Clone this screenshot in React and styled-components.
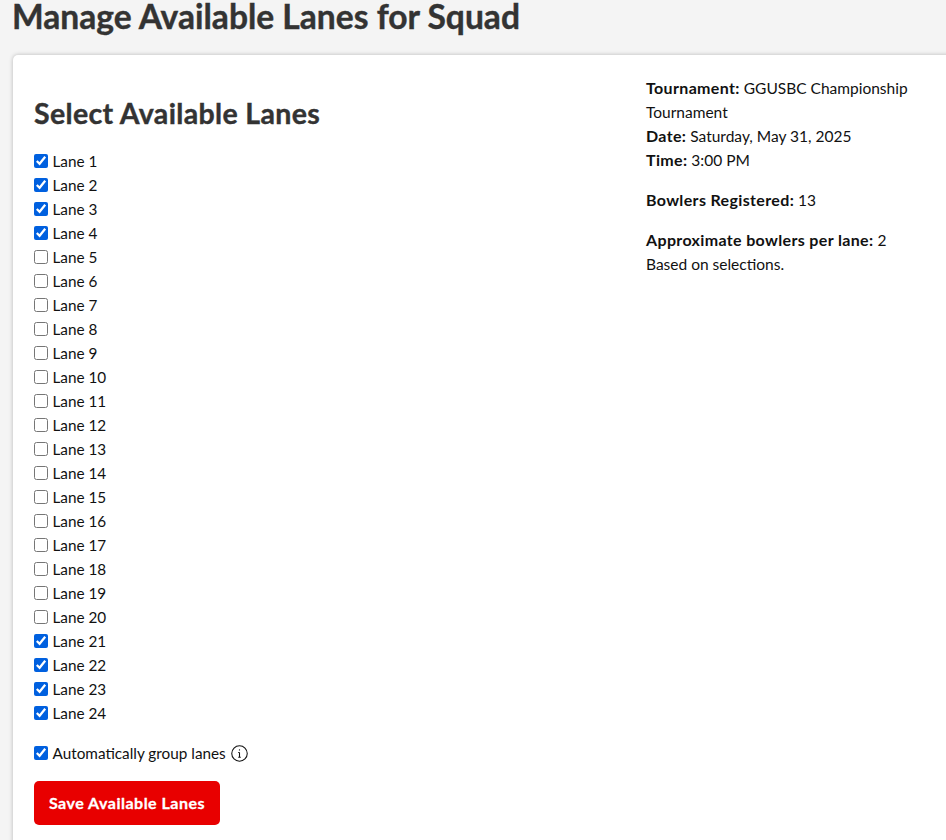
import React from "react"
import styled, { createGlobalStyle } from "styled-components"

const lanes = Array.from({ length: 24 }, (_, i) => ({
  id: i + 1,
  checked: i < 4 || i >= 20
}))

const GlobalStyle = createGlobalStyle`
  html, body {
    margin: 0;
    padding: 0;
    background: #f4f4f4;
    color: #111;
    font-family: Lato, "Open Sans", sans-serif;
    font-size: 16px;
    line-height: 24px;
  }
`

const Page = styled.div`
  height: 840px;
  overflow: hidden;
  padding-left: 13px;
`

const Title = styled.h1`
  margin: 0 0 0 -1px;
  height: 55px;
  font-size: 33.6px;
  line-height: 32px;
  font-weight: 700;
  color: #333;
  -webkit-text-stroke: 0.4px #333;
`

const Card = styled.div`
  display: grid;
  grid-template-columns: 612px 1fr;
  width: 960px;
  height: 800px;
  padding: 21px 21px 0;
  box-sizing: border-box;
  background: #fff;
  border-radius: 5px;
  box-shadow: 0 0 4px rgba(0, 0, 0, 0.25);
`

const Form = styled.div`
  padding-top: 19px;
`

const Heading = styled.h2`
  margin: 0 0 18px;
  font-size: 28.5px;
  line-height: 36px;
  letter-spacing: 0.35px;
  font-weight: 700;
  color: #333;
  -webkit-text-stroke: 0.4px #333;
`

const LaneList = styled.div`
  display: flex;
  flex-direction: column;
  margin-bottom: 16px;
`

const Row = styled.label`
  display: flex;
  align-items: center;
  height: 24px;
  font-size: 15.3px;
`

const Check = styled.input.attrs({ type: "checkbox" })`
  width: 14px;
  height: 14px;
  margin: 0 4.5px 0 0;
  accent-color: #0060df;
`

const InfoIcon = styled.svg`
  width: 17px;
  height: 17px;
  margin-left: 5px;
  fill: none;
  stroke: #111;
`

const SaveButton = styled.button`
  display: block;
  margin-top: 16px;
  width: 186px;
  height: 44px;
  padding: 0 0 2px;
  border: 0;
  border-radius: 5px;
  background: #e80000;
  color: #fff;
  font-family: inherit;
  font-size: 16px;
  letter-spacing: 0.5px;
  font-weight: 700;
  -webkit-text-stroke: 0.3px #fff;
`

const Side = styled.div`
  padding-right: 30px;
  font-size: 15.5px;
`

const Para = styled.p`
  margin: 0 0 16px;
`

const Label = styled.b`
  font-size: 16px;
  letter-spacing: 0.35px;
`

export default function App() {
  return (
    <Page>
      <GlobalStyle />
      <Title>Manage Available Lanes for Squad</Title>
      <Card>
        <Form>
          <Heading>Select Available Lanes</Heading>
          <LaneList>
            {lanes.map(lane => (
              <Row key={lane.id}>
                <Check defaultChecked={lane.checked} />
                Lane {lane.id}
              </Row>
            ))}
          </LaneList>
          <Row>
            <Check defaultChecked />
            Automatically group lanes
            <InfoIcon viewBox="0 0 16 16">
              <circle cx="8" cy="8" r="7.3" />
              <path d="M8 7v4.5M6.8 7H8M6.8 11.5h2.4" />
              <circle cx="8" cy="4.6" r="0.6" fill="#111" stroke="none" />
            </InfoIcon>
          </Row>
          <SaveButton>Save Available Lanes</SaveButton>
        </Form>
        <Side>
          <Para>
            <Label>Tournament:</Label> GGUSBC Championship Tournament
            <br />
            <Label>Date:</Label> Saturday, May 31, 2025
            <br />
            <Label>Time:</Label> 3:00 PM
          </Para>
          <Para>
            <Label>Bowlers Registered:</Label> 13
          </Para>
          <Para>
            <Label>Approximate bowlers per lane:</Label> 2
            <br />
            Based on selections.
          </Para>
        </Side>
      </Card>
    </Page>
  )
}
